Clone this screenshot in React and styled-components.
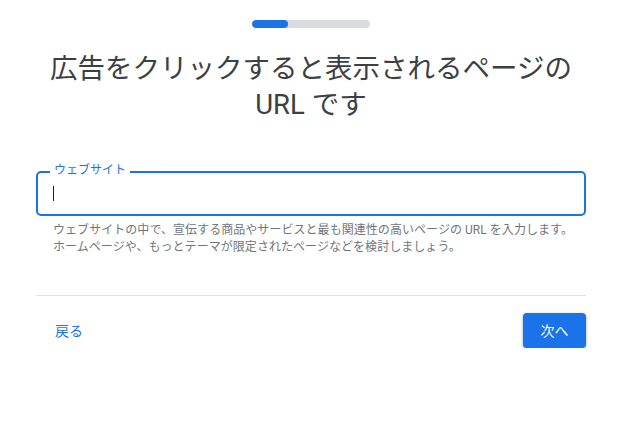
import React from 'react'
import styled, { createGlobalStyle } from 'styled-components'

const GlobalStyle = createGlobalStyle`
    body {
        margin: 0;
        background: #ffffff;
        font-family: Roboto, "Noto Sans CJK JP", sans-serif;
    }
`

const Page = styled.div`
    width: 550px;
    margin-left: 36px;
    display: flex;
    flex-direction: column;
`

const ProgressTrack = styled.div`
    align-self: center;
    margin-top: 20px;
    width: 118px;
    height: 8px;
    border-radius: 4px;
    background: #dadce0;
    overflow: hidden;
`

const ProgressFill = styled.div`
    height: 100%;
    border-radius: 4px;
    background: #1a73e8;
`

const Title = styled.h1`
    margin: 23px 0 0;
    text-align: center;
    font-size: 27.5px;
    line-height: 36px;
    font-weight: 400;
    color: #3c4043;
`

const Field = styled.div`
    position: relative;
    margin-top: 48px;
    height: 45px;
    border: 2px solid #1a73e8;
    border-radius: 5px;
    box-sizing: border-box;
    display: flex;
    align-items: center;
    padding-left: 15px;
`

const FieldLabel = styled.span`
    position: absolute;
    top: -11px;
    left: 12px;
    padding: 0 4px;
    background: #ffffff;
    font-size: 12px;
    line-height: 16px;
    color: #1a73e8;
`

const Caret = styled.span`
    width: 1px;
    height: 15px;
    background: #202124;
`

const Helper = styled.p`
    margin: 6px 0 0;
    padding-left: 17px;
    font-size: 12px;
    line-height: 17px;
    letter-spacing: 0.05px;
    color: #70757a;
`

const Divider = styled.hr`
    margin: 39px 0 0;
    border: none;
    border-top: 1px solid #e0e0e0;
`

const Footer = styled.div`
    display: flex;
    justify-content: space-between;
    align-items: center;
    margin-top: 16px;
`

const TextButton = styled.button`
    border: none;
    background: none;
    padding: 8px 16px 8px 19px;
    font-family: inherit;
    font-size: 14px;
    color: #1a73e8;
    cursor: pointer;
`

const PrimaryButton = styled.button`
    width: 63px;
    height: 35px;
    border: none;
    border-radius: 4px;
    background: #1a73e8;
    color: #ffffff;
    font-family: inherit;
    font-size: 14px;
    box-shadow: 0 1px 2px rgba(60, 64, 67, 0.3), 0 1px 3px 1px rgba(60, 64, 67, 0.15);
    cursor: pointer;
`

const App = () => {
    const step = 1
    const steps = 3.3

    return (
        <>
            <GlobalStyle />
            <Page>
                <ProgressTrack>
                    <ProgressFill style={{ width: `${(step / steps) * 100}%` }} />
                </ProgressTrack>
                <Title>
                    広告をクリックすると表示されるページの
                    <br />
                    URL です
                </Title>
                <Field>
                    <FieldLabel>ウェブサイト</FieldLabel>
                    <Caret />
                </Field>
                <Helper>
                    ウェブサイトの中で、宣伝する商品やサービスと最も関連性の高いページの URL を入力します。
                    <br />
                    ホームページや、もっとテーマが限定されたページなどを検討しましょう。
                </Helper>
                <Divider />
                <Footer>
                    <TextButton>戻る</TextButton>
                    <PrimaryButton>次へ</PrimaryButton>
                </Footer>
            </Page>
        </>
    )
}

export default App
